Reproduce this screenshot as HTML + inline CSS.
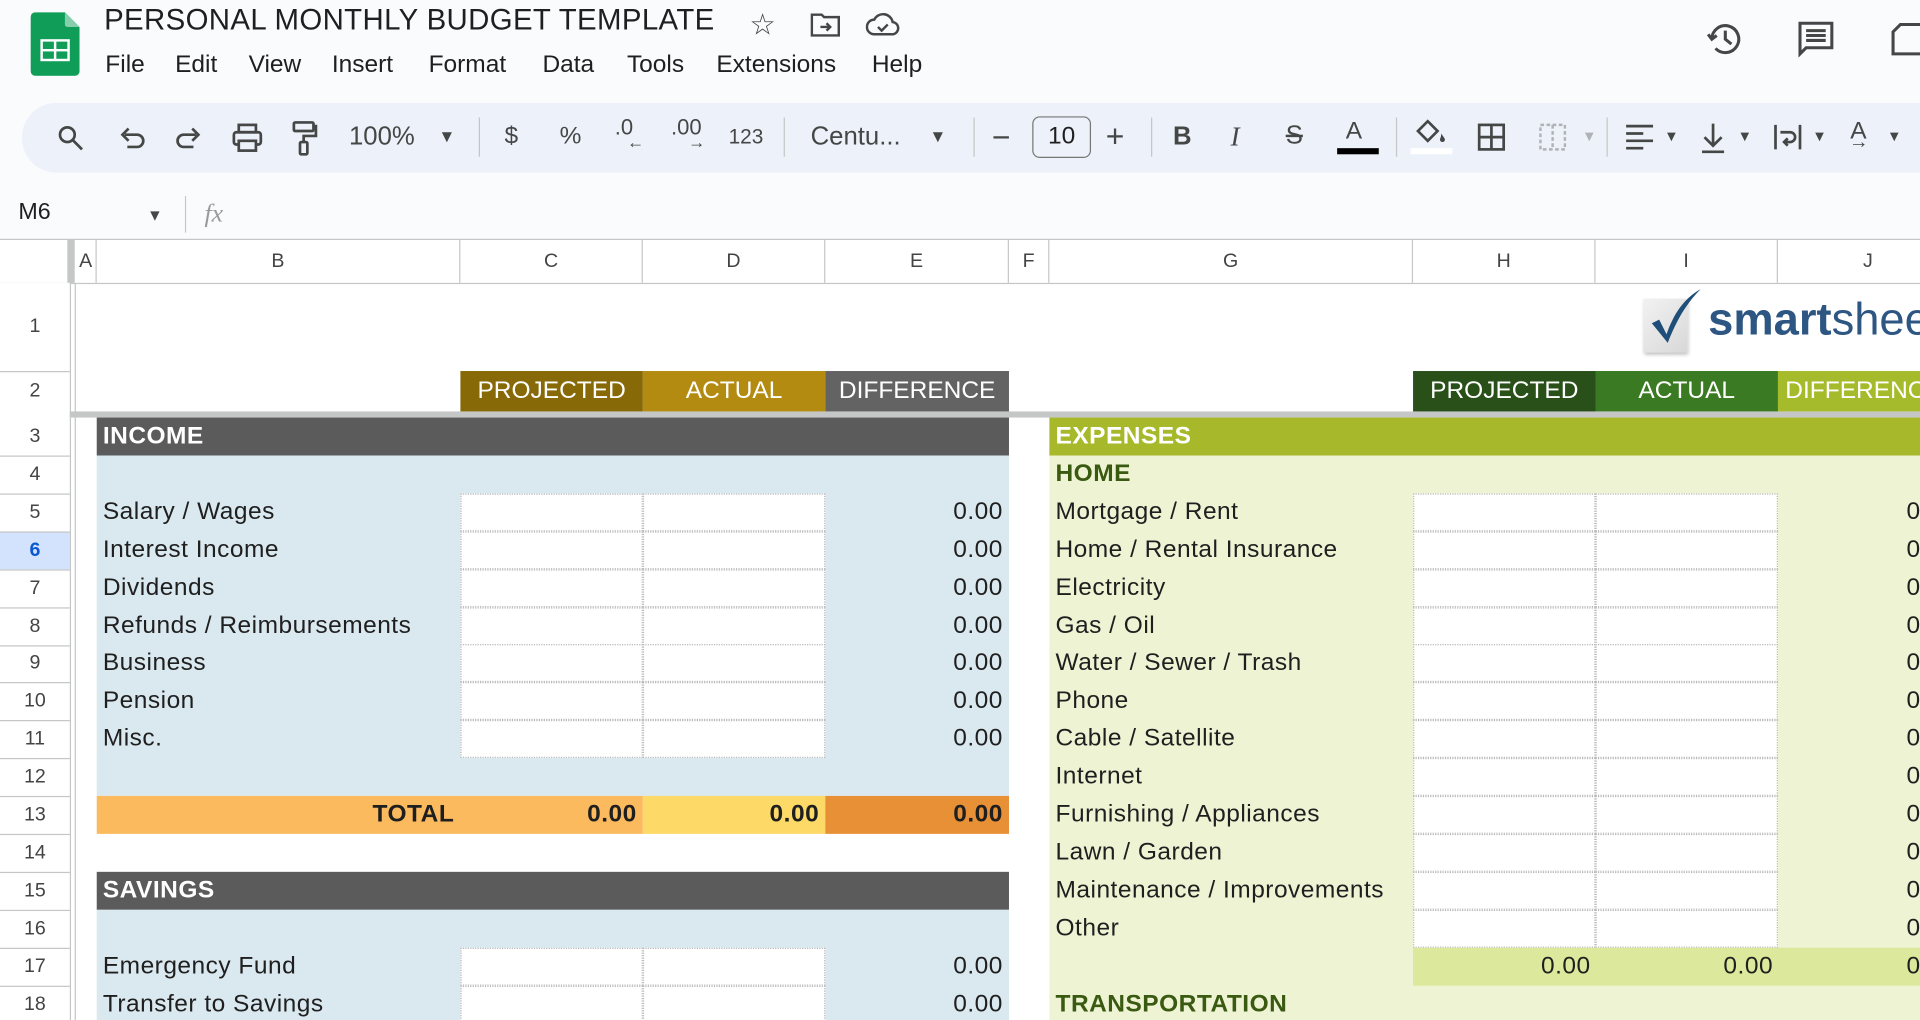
<!DOCTYPE html>
<html><head><meta charset="utf-8">
<style>
html,body{margin:0;padding:0;width:1920px;height:1020px;overflow:hidden;background:#fff;}
#w{position:absolute;left:0;top:0;width:1568px;height:833px;transform:scale(1.22449);transform-origin:0 0;font-family:"Liberation Sans",sans-serif;color:#1f1f1f;overflow:hidden;background:#fff;}
.a{position:absolute;}
.t{position:absolute;font-size:20px;white-space:nowrap;}
.ic{position:absolute;font-size:20px;color:#444746;text-align:center;}
.hd{position:absolute;top:196px;height:35px;line-height:35px;font-size:16px;color:#444;text-align:center;border-right:1px solid #c7c7c7;box-sizing:border-box;}
.rn{position:absolute;left:0;width:57px;text-align:center;font-size:16px;color:#444;}
.in{position:absolute;background:#fff;box-sizing:border-box;border:1px dotted #b8b8b8;}
.lbl{position:absolute;font-size:20px;white-space:nowrap;height:31px;line-height:31px;letter-spacing:0.4px;}
.num{position:absolute;font-size:20px;text-align:right;height:31px;line-height:31px;letter-spacing:0.4px;}
.wh{position:absolute;color:#fff;font-size:20px;text-align:center;line-height:33px;height:33px;}
</style></head><body><div id="w">
<div class="a" style="left:0;top:0;width:1568px;height:196px;background:#f9fbfd;"></div>
<svg class="a" style="left:25px;top:10px" width="40" height="52" viewBox="0 0 40 52"><path d="M4 0H28L40 12V48a4 4 0 0 1-4 4H4a4 4 0 0 1-4-4V4a4 4 0 0 1 4-4z" fill="#0f9d58"/><path d="M28 0L40 12H30a2 2 0 0 1-2-2z" fill="#87ceac"/><rect x="8" y="22" width="24" height="18" fill="#fff"/><rect x="10" y="24" width="9" height="6" fill="#0f9d58"/><rect x="21" y="24" width="9" height="6" fill="#0f9d58"/><rect x="10" y="32" width="9" height="6" fill="#0f9d58"/><rect x="21" y="32" width="9" height="6" fill="#0f9d58"/></svg>
<div class="t" style="left:85px;top:3px;font-size:24px;color:#1f1f1f;letter-spacing:0.3px;">PERSONAL MONTHLY BUDGET TEMPLATE</div>
<div class="ic" style="left:612px;top:6px;font-size:24px;">☆</div>
<svg class="a" style="left:662px;top:10px" width="24" height="20" viewBox="0 0 24 20" fill="none" stroke="#444746" stroke-width="2"><path d="M1 2h8l2 2h12v15H1z"/><path d="M8 12h8M13 9l3 3-3 3"/></svg>
<svg class="a" style="left:707px;top:10px" width="28" height="20" viewBox="0 0 28 20" fill="none" stroke="#444746" stroke-width="2"><path d="M7 18a6 6 0 0 1 0-12 8 8 0 0 1 15 2 5 5 0 0 1-1 10z"/><path d="M10 12l3 3 5-5"/></svg>
<div class="t" style="left:86px;top:42px;">File</div>
<div class="t" style="left:143px;top:42px;">Edit</div>
<div class="t" style="left:203px;top:42px;">View</div>
<div class="t" style="left:271px;top:42px;">Insert</div>
<div class="t" style="left:350px;top:42px;">Format</div>
<div class="t" style="left:443px;top:42px;">Data</div>
<div class="t" style="left:512px;top:42px;">Tools</div>
<div class="t" style="left:585px;top:42px;">Extensions</div>
<div class="t" style="left:712px;top:42px;">Help</div>
<svg class="a" style="left:1393px;top:16px" width="32" height="32" viewBox="0 0 32 32" fill="none" stroke="#444746" stroke-width="2.5"><path d="M5 16a11 11 0 1 1 3 7.5"/><path d="M2 12l3 4 4-3"/><path d="M16 9v7l5 4"/></svg>
<svg class="a" style="left:1467px;top:16px" width="32" height="32" viewBox="0 0 32 32" fill="none" stroke="#444746" stroke-width="2.5"><path d="M3 3h26v20H8l-5 5z" /><path d="M8 9h16M8 13h16M8 17h16"/></svg>
<svg class="a" style="left:1544px;top:18px" width="30" height="28" viewBox="0 0 30 28" fill="none" stroke="#444746" stroke-width="2.5"><path d="M2 26V8l6-6h20v24z"/></svg>
<div class="a" style="left:18px;top:84px;width:1600px;height:57px;border-radius:28px;background:#edf2fa;"></div>
<svg class="a" style="left:46px;top:101px" width="24" height="24" viewBox="0 0 24 24" fill="none" stroke="#444746" stroke-width="2.2"><circle cx="9" cy="9" r="6"/><path d="M13.5 13.5L21 21"/></svg>
<svg class="a" style="left:96px;top:102px" width="24" height="22" viewBox="0 0 24 22" fill="none" stroke="#444746" stroke-width="2.2"><path d="M6 8h10a5 5 0 0 1 0 10H8"/><path d="M9 3L4 8l5 5"/></svg>
<svg class="a" style="left:142px;top:102px" width="24" height="22" viewBox="0 0 24 22" fill="none" stroke="#444746" stroke-width="2.2"><path d="M18 8H8a5 5 0 0 0 0 10h8"/><path d="M15 3l5 5-5 5"/></svg>
<svg class="a" style="left:189px;top:100px" width="26" height="26" viewBox="0 0 26 26" fill="none" stroke="#444746" stroke-width="2.2"><rect x="6" y="2" width="14" height="6"/><rect x="2" y="8" width="22" height="10" rx="2"/><rect x="6" y="15" width="14" height="8" fill="#edf2fa"/></svg>
<svg class="a" style="left:236px;top:98px" width="24" height="30" viewBox="0 0 24 30" fill="none" stroke="#444746" stroke-width="2.2"><rect x="4" y="2" width="16" height="7" rx="1"/><path d="M20 5h2v8H12v5"/><rect x="9" y="18" width="6" height="10" rx="1"/></svg>
<div class="t" style="left:285px;top:100px;font-size:21px;color:#444746;">100%</div>
<div class="ic" style="left:358px;top:103px;font-size:14px;">▼</div>
<div class="a" style="left:391px;top:96px;width:1px;height:32px;background:#c4c7c5;"></div>
<div class="t" style="left:412px;top:100px;font-size:20px;color:#444746;">$</div>
<div class="t" style="left:457px;top:100px;font-size:20px;color:#444746;">%</div>
<div class="t" style="left:502px;top:94px;font-size:18px;color:#444746;">.0<span style="position:absolute;left:10px;top:14px;font-size:14px;">←</span></div>
<div class="t" style="left:548px;top:94px;font-size:18px;color:#444746;">.00<span style="position:absolute;left:14px;top:14px;font-size:14px;">→</span></div>
<div class="t" style="left:595px;top:102px;font-size:17px;color:#444746;">123</div>
<div class="a" style="left:640px;top:96px;width:1px;height:32px;background:#c4c7c5;"></div>
<div class="t" style="left:662px;top:100px;font-size:21px;color:#444746;">Centu...</div>
<div class="ic" style="left:759px;top:103px;font-size:14px;">▼</div>
<div class="a" style="left:795px;top:96px;width:1px;height:32px;background:#c4c7c5;"></div>
<div class="t" style="left:810px;top:97px;font-size:26px;color:#444746;">−</div>
<div class="a" style="left:843px;top:95px;width:48px;height:34px;border:1.5px solid #747775;border-radius:6px;box-sizing:border-box;text-align:center;line-height:31px;font-size:20px;color:#1f1f1f;">10</div>
<div class="t" style="left:903px;top:96px;font-size:26px;color:#444746;">+</div>
<div class="a" style="left:940px;top:96px;width:1px;height:32px;background:#c4c7c5;"></div>
<div class="t" style="left:958px;top:100px;font-size:21px;font-weight:bold;color:#444746;">B</div>
<div class="t" style="left:1005px;top:99px;font-size:22px;font-style:italic;font-family:'Liberation Serif',serif;color:#444746;">I</div>
<div class="t" style="left:1050px;top:99px;font-size:21px;color:#444746;text-decoration:line-through;">S</div>
<div class="t" style="left:1099px;top:96px;font-size:20px;color:#444746;">A</div>
<div class="a" style="left:1092px;top:121px;width:34px;height:5px;background:#000;"></div>
<div class="a" style="left:1140px;top:96px;width:1px;height:32px;background:#c4c7c5;"></div>
<svg class="a" style="left:1155px;top:96px" width="28" height="24" viewBox="0 0 28 24" fill="#444746"><path d="M3 11L11 3l8 8-8 8z" fill="none" stroke="#444746" stroke-width="2.2"/><path d="M22 13c2 3 3 4 3 5a2 2 0 0 1-4 0c0-1 1-2 1-5z"/></svg>
<div class="a" style="left:1152px;top:121px;width:34px;height:5px;background:#fff;"></div>
<svg class="a" style="left:1206px;top:100px" width="24" height="24" viewBox="0 0 24 24" fill="none" stroke="#444746" stroke-width="2.2"><rect x="2" y="2" width="20" height="20"/><path d="M12 2v20M2 12h20"/></svg>
<svg class="a" style="left:1256px;top:100px" width="24" height="24" viewBox="0 0 24 24" fill="none" stroke="#b0b3b5" stroke-width="2" stroke-dasharray="3 2"><rect x="2" y="2" width="20" height="20"/><path d="M12 2v20"/></svg>
<div class="ic" style="left:1292px;top:104px;font-size:12px;color:#b0b3b5;">▼</div>
<div class="a" style="left:1312px;top:96px;width:1px;height:32px;background:#c4c7c5;"></div>
<svg class="a" style="left:1327px;top:101px" width="24" height="22" viewBox="0 0 24 22" fill="none" stroke="#444746" stroke-width="2.2"><path d="M1 2h22M1 8h14M1 14h22M1 20h14"/></svg>
<div class="ic" style="left:1359px;top:104px;font-size:12px;">▼</div>
<svg class="a" style="left:1388px;top:100px" width="22" height="26" viewBox="0 0 22 26" fill="none" stroke="#444746" stroke-width="2.2"><path d="M11 1v17M4 12l7 7 7-7M2 24h18"/></svg>
<div class="ic" style="left:1419px;top:104px;font-size:12px;">▼</div>
<svg class="a" style="left:1448px;top:100px" width="24" height="24" viewBox="0 0 24 24" fill="none" stroke="#444746" stroke-width="2.2"><path d="M2 2v20M22 2v20M6 8h8a4 4 0 0 1 0 8h-4M12 13l-3 3 3 3"/></svg>
<div class="ic" style="left:1480px;top:104px;font-size:12px;">▼</div>
<div class="t" style="left:1511px;top:96px;font-size:20px;color:#444746;">A</div>
<div class="t" style="left:1510px;top:108px;font-size:16px;color:#444746;">→</div>
<div class="ic" style="left:1541px;top:104px;font-size:12px;">▼</div>
<div class="t" style="left:15px;top:163px;font-size:19px;">M6</div>
<div class="ic" style="left:120px;top:168px;font-size:13px;">▼</div>
<div class="a" style="left:151px;top:160px;width:1px;height:30px;background:#c7c7c7;"></div>
<div class="t" style="left:167px;top:162px;font-size:21px;font-style:italic;font-family:'Liberation Serif',serif;color:#999;">fx</div>
<div class="a" style="left:0;top:195px;width:1568px;height:1px;background:#c4c7c5;"></div>
<div class="a" style="left:0;top:231px;width:1568px;height:1px;background:#c4c7c5;"></div>
<div class="a" style="left:55px;top:196px;width:6px;height:35px;background:#c4c7c5;"></div>
<div class="a" style="left:61px;top:231px;width:1px;height:602px;background:#c4c7c5;"></div>
<div class="hd" style="left:62px;width:17px;">A</div>
<div class="hd" style="left:79px;width:297px;">B</div>
<div class="hd" style="left:376px;width:149px;">C</div>
<div class="hd" style="left:525px;width:149px;">D</div>
<div class="hd" style="left:674px;width:150px;">E</div>
<div class="hd" style="left:824px;width:33px;">F</div>
<div class="hd" style="left:857px;width:297px;">G</div>
<div class="hd" style="left:1154px;width:149px;">H</div>
<div class="hd" style="left:1303px;width:149px;">I</div>
<div class="hd" style="left:1452px;width:148px;">J</div>
<div class="a" style="left:0;top:336px;width:1568px;height:5px;background:#c4c7c5;"></div>
<div class="a" style="left:0;top:231px;width:57px;height:602px;background:#fff;"></div>
<div class="a" style="left:0;top:433.7px;width:57px;height:30.9px;background:#d3e3fd;"></div>
<div class="rn" style="top:231px;line-height:72px;border-bottom:1px solid #c4c7c5;height:72px;">1</div>
<div class="rn" style="top:303px;line-height:33px;">2</div>
<div class="rn" style="top:341px;line-height:31px;border-bottom:1px solid #c4c7c5;">3</div>
<div class="rn" style="top:371.9px;line-height:31px;border-bottom:1px solid #c4c7c5;">4</div>
<div class="rn" style="top:402.8px;line-height:31px;border-bottom:1px solid #c4c7c5;">5</div>
<div class="rn" style="top:433.7px;line-height:31px;border-bottom:1px solid #c4c7c5;font-weight:bold;color:#0b57d0;">6</div>
<div class="rn" style="top:464.6px;line-height:31px;border-bottom:1px solid #c4c7c5;">7</div>
<div class="rn" style="top:495.5px;line-height:31px;border-bottom:1px solid #c4c7c5;">8</div>
<div class="rn" style="top:526.4px;line-height:31px;border-bottom:1px solid #c4c7c5;">9</div>
<div class="rn" style="top:557.3px;line-height:31px;border-bottom:1px solid #c4c7c5;">10</div>
<div class="rn" style="top:588.2px;line-height:31px;border-bottom:1px solid #c4c7c5;">11</div>
<div class="rn" style="top:619.1px;line-height:31px;border-bottom:1px solid #c4c7c5;">12</div>
<div class="rn" style="top:650px;line-height:31px;border-bottom:1px solid #c4c7c5;">13</div>
<div class="rn" style="top:680.9px;line-height:31px;border-bottom:1px solid #c4c7c5;">14</div>
<div class="rn" style="top:711.8px;line-height:31px;border-bottom:1px solid #c4c7c5;">15</div>
<div class="rn" style="top:742.7px;line-height:31px;border-bottom:1px solid #c4c7c5;">16</div>
<div class="rn" style="top:773.6px;line-height:31px;border-bottom:1px solid #c4c7c5;">17</div>
<div class="rn" style="top:804.5px;line-height:31px;border-bottom:1px solid #c4c7c5;">18</div>
<div class="a" style="left:57px;top:231px;width:1px;height:602px;background:#c4c7c5;"></div>
<div class="a" style="left:1342px;top:244px;width:36px;height:44px;background:linear-gradient(135deg,#f2f2f2,#d8d8d8);box-shadow:1px 2px 3px #bbb;"></div>
<svg class="a" style="left:1345px;top:234px" width="48" height="50" viewBox="0 0 48 50"><path d="M4 30l6-3 6 12C22 22 30 10 44 2 32 14 24 28 17 46z" fill="#1f4e79"/></svg>
<div class="t" style="left:1395px;top:240px;font-size:37px;color:#2d5683;"><b>smart</b>sheet</div>
<div class="wh" style="left:376px;top:303px;width:149px;background:#876a07;">PROJECTED</div>
<div class="wh" style="left:525px;top:303px;width:149px;background:#b38b10;">ACTUAL</div>
<div class="wh" style="left:674px;top:303px;width:150px;background:#636363;">DIFFERENCE</div>
<div class="wh" style="left:1154px;top:303px;width:149px;background:#285018;">PROJECTED</div>
<div class="wh" style="left:1303px;top:303px;width:149px;background:#3a7a22;">ACTUAL</div>
<div class="wh" style="left:1452px;top:303px;width:148px;background:#a6bb2b;text-align:left;padding-left:6px;">DIFFERENCE</div>
<div class="a" style="left:79px;top:341px;width:745px;height:31px;background:#5b5b5b;"></div>
<div class="lbl" style="left:84px;top:341px;color:#fff;font-weight:bold;">INCOME</div>
<div class="a" style="left:79px;top:371.9px;width:745px;height:278.1px;background:#dae8ef;"></div>
<div class="in" style="left:376px;top:402.8px;width:149px;height:31px;"></div><div class="in" style="left:525px;top:402.8px;width:149px;height:31px;"></div>
<div class="in" style="left:376px;top:433.7px;width:149px;height:31px;"></div><div class="in" style="left:525px;top:433.7px;width:149px;height:31px;"></div>
<div class="in" style="left:376px;top:464.6px;width:149px;height:31px;"></div><div class="in" style="left:525px;top:464.6px;width:149px;height:31px;"></div>
<div class="in" style="left:376px;top:495.5px;width:149px;height:31px;"></div><div class="in" style="left:525px;top:495.5px;width:149px;height:31px;"></div>
<div class="in" style="left:376px;top:526.4px;width:149px;height:31px;"></div><div class="in" style="left:525px;top:526.4px;width:149px;height:31px;"></div>
<div class="in" style="left:376px;top:557.3px;width:149px;height:31px;"></div><div class="in" style="left:525px;top:557.3px;width:149px;height:31px;"></div>
<div class="in" style="left:376px;top:588.2px;width:149px;height:31px;"></div><div class="in" style="left:525px;top:588.2px;width:149px;height:31px;"></div>
<div class="lbl" style="left:84px;top:402.8px;">Salary / Wages</div>
<div class="lbl" style="left:84px;top:433.7px;">Interest Income</div>
<div class="lbl" style="left:84px;top:464.6px;">Dividends</div>
<div class="lbl" style="left:84px;top:495.5px;">Refunds / Reimbursements</div>
<div class="lbl" style="left:84px;top:526.4px;">Business</div>
<div class="lbl" style="left:84px;top:557.3px;">Pension</div>
<div class="lbl" style="left:84px;top:588.2px;">Misc.</div>
<div class="num" style="left:674px;width:145px;top:402.8px;">0.00</div>
<div class="num" style="left:674px;width:145px;top:433.7px;">0.00</div>
<div class="num" style="left:674px;width:145px;top:464.6px;">0.00</div>
<div class="num" style="left:674px;width:145px;top:495.5px;">0.00</div>
<div class="num" style="left:674px;width:145px;top:526.4px;">0.00</div>
<div class="num" style="left:674px;width:145px;top:557.3px;">0.00</div>
<div class="num" style="left:674px;width:145px;top:588.2px;">0.00</div>
<div class="a" style="left:79px;top:650px;width:446px;height:31px;background:#fcba5e;"></div>
<div class="a" style="left:525px;top:650px;width:149px;height:31px;background:#fdd967;"></div>
<div class="a" style="left:674px;top:650px;width:150px;height:31px;background:#e79036;"></div>
<div class="num" style="left:79px;width:292px;top:650px;font-weight:bold;">TOTAL</div>
<div class="num" style="left:376px;width:144px;top:650px;font-weight:bold;">0.00</div>
<div class="num" style="left:525px;width:144px;top:650px;font-weight:bold;">0.00</div>
<div class="num" style="left:674px;width:145px;top:650px;font-weight:bold;">0.00</div>
<div class="a" style="left:79px;top:711.8px;width:745px;height:31px;background:#5b5b5b;"></div>
<div class="lbl" style="left:84px;top:711.8px;color:#fff;font-weight:bold;">SAVINGS</div>
<div class="a" style="left:79px;top:742.7px;width:745px;height:91px;background:#dae8ef;"></div>
<div class="in" style="left:376px;top:773.6px;width:149px;height:31px;"></div><div class="in" style="left:525px;top:773.6px;width:149px;height:31px;"></div>
<div class="in" style="left:376px;top:804.5px;width:149px;height:31px;"></div><div class="in" style="left:525px;top:804.5px;width:149px;height:31px;"></div>
<div class="lbl" style="left:84px;top:773.6px;">Emergency Fund</div>
<div class="lbl" style="left:84px;top:804.5px;">Transfer to Savings</div>
<div class="num" style="left:674px;width:145px;top:773.6px;">0.00</div>
<div class="num" style="left:674px;width:145px;top:804.5px;">0.00</div>
<div class="a" style="left:857px;top:341px;width:711px;height:31px;background:#a7b92a;"></div>
<div class="lbl" style="left:862px;top:341px;color:#fff;font-weight:bold;">EXPENSES</div>
<div class="a" style="left:857px;top:371.9px;width:711px;height:462px;background:#eef3d4;"></div>
<div class="lbl" style="left:862px;top:371.9px;color:#3a5a12;font-weight:bold;">HOME</div>
<div class="in" style="left:1154px;top:402.8px;width:149px;height:31px;"></div><div class="in" style="left:1303px;top:402.8px;width:149px;height:31px;"></div>
<div class="in" style="left:1154px;top:433.7px;width:149px;height:31px;"></div><div class="in" style="left:1303px;top:433.7px;width:149px;height:31px;"></div>
<div class="in" style="left:1154px;top:464.6px;width:149px;height:31px;"></div><div class="in" style="left:1303px;top:464.6px;width:149px;height:31px;"></div>
<div class="in" style="left:1154px;top:495.5px;width:149px;height:31px;"></div><div class="in" style="left:1303px;top:495.5px;width:149px;height:31px;"></div>
<div class="in" style="left:1154px;top:526.4px;width:149px;height:31px;"></div><div class="in" style="left:1303px;top:526.4px;width:149px;height:31px;"></div>
<div class="in" style="left:1154px;top:557.3px;width:149px;height:31px;"></div><div class="in" style="left:1303px;top:557.3px;width:149px;height:31px;"></div>
<div class="in" style="left:1154px;top:588.2px;width:149px;height:31px;"></div><div class="in" style="left:1303px;top:588.2px;width:149px;height:31px;"></div>
<div class="in" style="left:1154px;top:619.1px;width:149px;height:31px;"></div><div class="in" style="left:1303px;top:619.1px;width:149px;height:31px;"></div>
<div class="in" style="left:1154px;top:650px;width:149px;height:31px;"></div><div class="in" style="left:1303px;top:650px;width:149px;height:31px;"></div>
<div class="in" style="left:1154px;top:680.9px;width:149px;height:31px;"></div><div class="in" style="left:1303px;top:680.9px;width:149px;height:31px;"></div>
<div class="in" style="left:1154px;top:711.8px;width:149px;height:31px;"></div><div class="in" style="left:1303px;top:711.8px;width:149px;height:31px;"></div>
<div class="in" style="left:1154px;top:742.7px;width:149px;height:31px;"></div><div class="in" style="left:1303px;top:742.7px;width:149px;height:31px;"></div>
<div class="lbl" style="left:862px;top:402.8px;">Mortgage / Rent</div>
<div class="lbl" style="left:862px;top:433.7px;">Home / Rental Insurance</div>
<div class="lbl" style="left:862px;top:464.6px;">Electricity</div>
<div class="lbl" style="left:862px;top:495.5px;">Gas / Oil</div>
<div class="lbl" style="left:862px;top:526.4px;">Water / Sewer / Trash</div>
<div class="lbl" style="left:862px;top:557.3px;">Phone</div>
<div class="lbl" style="left:862px;top:588.2px;">Cable / Satellite</div>
<div class="lbl" style="left:862px;top:619.1px;">Internet</div>
<div class="lbl" style="left:862px;top:650px;">Furnishing / Appliances</div>
<div class="lbl" style="left:862px;top:680.9px;">Lawn / Garden</div>
<div class="lbl" style="left:862px;top:711.8px;">Maintenance / Improvements</div>
<div class="lbl" style="left:862px;top:742.7px;">Other</div>
<div class="lbl" style="left:1557px;top:402.8px;">0</div>
<div class="lbl" style="left:1557px;top:433.7px;">0</div>
<div class="lbl" style="left:1557px;top:464.6px;">0</div>
<div class="lbl" style="left:1557px;top:495.5px;">0</div>
<div class="lbl" style="left:1557px;top:526.4px;">0</div>
<div class="lbl" style="left:1557px;top:557.3px;">0</div>
<div class="lbl" style="left:1557px;top:588.2px;">0</div>
<div class="lbl" style="left:1557px;top:619.1px;">0</div>
<div class="lbl" style="left:1557px;top:650px;">0</div>
<div class="lbl" style="left:1557px;top:680.9px;">0</div>
<div class="lbl" style="left:1557px;top:711.8px;">0</div>
<div class="lbl" style="left:1557px;top:742.7px;">0</div>
<div class="a" style="left:1154px;top:773.6px;width:414px;height:31px;background:#dce89c;"></div>
<div class="num" style="left:1154px;width:145px;top:773.6px;">0.00</div>
<div class="num" style="left:1303px;width:145px;top:773.6px;">0.00</div>
<div class="lbl" style="left:1557px;top:773.6px;">0</div>
<div class="lbl" style="left:862px;top:804.5px;color:#3a5a12;font-weight:bold;">TRANSPORTATION</div>
</div></body></html>
